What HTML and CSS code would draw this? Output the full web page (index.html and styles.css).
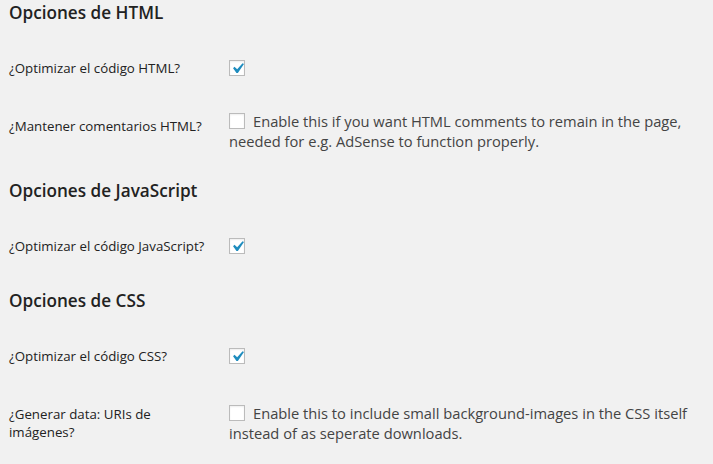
FILE: index.html
```html
<!DOCTYPE html>
<html lang="es">
<head>
<meta charset="utf-8">
<title>Opciones</title>
<link rel="stylesheet" href="styles.css">
</head>
<body>
<div class="wrap">
  <h3 class="section-title">Opciones de HTML</h3>
  <div class="form-table">
    <div class="row">
      <div class="th">¿Optimizar el código HTML?</div>
      <div class="td"><span class="cb checked"><svg viewBox="0 0 20 20" width="21" height="21"><path d="M14.83 4.89l1.34.94-5.81 8.38H9.02L5.78 9.67l1.34-1.25 2.57 2.4z"/></svg></span></div>
    </div>
    <div class="row">
      <div class="th">¿Mantener comentarios HTML?</div>
      <div class="td"><span class="cb"></span><span class="desc">Enable this if you want HTML comments to remain in the page, needed for e.g. AdSense to function properly.</span></div>
    </div>
  </div>

  <h3 class="section-title">Opciones de JavaScript</h3>
  <div class="form-table">
    <div class="row">
      <div class="th">¿Optimizar el código JavaScript?</div>
      <div class="td"><span class="cb checked"><svg viewBox="0 0 20 20" width="21" height="21"><path d="M14.83 4.89l1.34.94-5.81 8.38H9.02L5.78 9.67l1.34-1.25 2.57 2.4z"/></svg></span></div>
    </div>
  </div>

  <h3 class="section-title">Opciones de CSS</h3>
  <div class="form-table">
    <div class="row">
      <div class="th">¿Optimizar el código CSS?</div>
      <div class="td"><span class="cb checked"><svg viewBox="0 0 20 20" width="21" height="21"><path d="M14.83 4.89l1.34.94-5.81 8.38H9.02L5.78 9.67l1.34-1.25 2.57 2.4z"/></svg></span></div>
    </div>
    <div class="row">
      <div class="th">¿Generar data: URIs de imágenes?</div>
      <div class="td"><span class="cb"></span><span class="desc">Enable this to include small background-images in the CSS itself instead of as seperate downloads.</span></div>
    </div>
  </div>
</div>
</body>
</html>
```

FILE: styles.css
```css
html, body {
  margin: 0;
  padding: 0;
  background: #f1f1f1;
}

body {
  font-family: "Open Sans", "Liberation Sans", sans-serif;
  font-size: 13px;
  color: #444;
  overflow: hidden;
}

.wrap {
  padding: 1px 10px 0 9px;
}

.section-title {
  margin: 15px 0 13px;
  font-size: 17.16px;
  line-height: 24px;
  font-weight: 600;
  color: #222;
}

.wrap > .section-title:first-child {
  margin-top: 0;
}

.row {
  display: flex;
  align-items: center;
}

.th {
  align-self: flex-start;
  flex: 0 0 200px;
  padding: 21px 20px 19px 0;
  font-size: 13.3px;
  line-height: 18px;
  color: #222;
}

.td {
  flex: 1 1 auto;
  min-width: 0;
  padding: 15px 0 13px;
  font-size: 14.7px;
  line-height: 20px;
  color: #444;
}

.cb {
  position: relative;
  display: inline-block;
  box-sizing: border-box;
  width: 16px;
  height: 16px;
  margin: -4px 8px 0 0;
  vertical-align: middle;
  background: #fff;
  border: 1px solid #bbb;
  box-shadow: inset 0 1px 2px rgba(0, 0, 0, 0.07);
}

.cb svg {
  position: absolute;
  left: -3px;
  top: -3px;
  fill: #1e8cbe;
}
```
